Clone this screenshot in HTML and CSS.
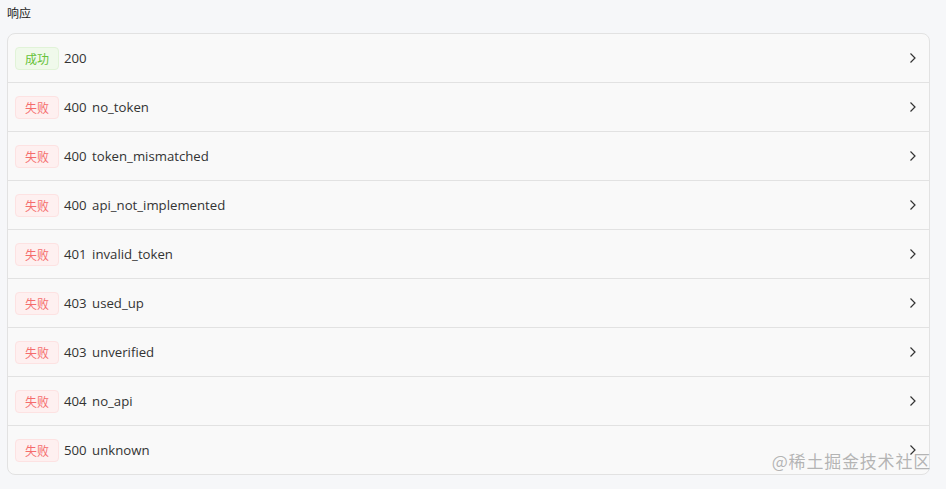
FILE: index.html
```html
<!DOCTYPE html>
<html lang="zh">
<head>
<meta charset="utf-8">
<link rel="stylesheet" href="styles.css">
</head>
<body>
<div class="page">
  <div class="title">响应</div>
  <div class="card">
    <div class="row"><span class="tag ok">成功</span><span class="label">200</span><svg class="chev" viewBox="0 0 8 12"><path d="M1.5 1.5 L6 6 L1.5 10.5" /></svg></div>
    <div class="row"><span class="tag fail">失败</span><span class="label">400 no_token</span><svg class="chev" viewBox="0 0 8 12"><path d="M1.5 1.5 L6 6 L1.5 10.5" /></svg></div>
    <div class="row"><span class="tag fail">失败</span><span class="label">400 token_mismatched</span><svg class="chev" viewBox="0 0 8 12"><path d="M1.5 1.5 L6 6 L1.5 10.5" /></svg></div>
    <div class="row"><span class="tag fail">失败</span><span class="label">400 api_not_implemented</span><svg class="chev" viewBox="0 0 8 12"><path d="M1.5 1.5 L6 6 L1.5 10.5" /></svg></div>
    <div class="row"><span class="tag fail">失败</span><span class="label">401 invalid_token</span><svg class="chev" viewBox="0 0 8 12"><path d="M1.5 1.5 L6 6 L1.5 10.5" /></svg></div>
    <div class="row"><span class="tag fail">失败</span><span class="label">403 used_up</span><svg class="chev" viewBox="0 0 8 12"><path d="M1.5 1.5 L6 6 L1.5 10.5" /></svg></div>
    <div class="row"><span class="tag fail">失败</span><span class="label">403 unverified</span><svg class="chev" viewBox="0 0 8 12"><path d="M1.5 1.5 L6 6 L1.5 10.5" /></svg></div>
    <div class="row"><span class="tag fail">失败</span><span class="label">404 no_api</span><svg class="chev" viewBox="0 0 8 12"><path d="M1.5 1.5 L6 6 L1.5 10.5" /></svg></div>
    <div class="row"><span class="tag fail">失败</span><span class="label">500 unknown</span><svg class="chev" viewBox="0 0 8 12"><path d="M1.5 1.5 L6 6 L1.5 10.5" /></svg></div>
  </div>
  <div class="watermark">@稀土掘金技术社区</div>
</div>
</body>
</html>
```
FILE: styles.css
```css
html, body {
  margin: 0;
  padding: 0;
  background: #f6f7f9;
}
body {
  font-family: "Open Sans", "Noto Sans CJK SC", sans-serif;
  color: #333;
}
.page {
  position: relative;
  padding: 4px 16px 0 7px;
  height: 485px;
}
.title {
  font-size: 12px;
  line-height: 17px;
  height: 29px;
  font-family: "Noto Sans CJK SC", sans-serif;
  color: #1a1a1a;
}
.card {
  background: #f9f9f9;
  border: 1px solid #e2e2e2;
  border-radius: 8px;
  display: flex;
  flex-direction: column;
}
.row {
  height: 48px;
  display: flex;
  align-items: center;
  padding: 0 12px 0 7px;
  border-bottom: 1px solid #e2e2e2;
}
.row:last-child {
  border-bottom: none;
}
.tag {
  box-sizing: border-box;
  height: 23px;
  padding: 0 9px;
  display: inline-flex;
  align-items: center;
  font-size: 12px;
  font-family: "Noto Sans CJK SC", sans-serif;
  border-radius: 4px;
  border: 1px solid;
  margin-right: 5px;
}
.tag.ok {
  background: #f0f9eb;
  border-color: #e1f3d8;
  color: #67c23a;
}
.tag.fail {
  background: #fef0f0;
  border-color: #fde2e2;
  color: #f56c6c;
}
.label {
  flex: 1;
  font-size: 13.2px;
  word-spacing: 2px;
  color: #333;
}
.chev {
  width: 8px;
  height: 12px;
  fill: none;
  stroke: #333;
  stroke-width: 1.2;
}
.watermark {
  position: absolute;
  right: 15px;
  bottom: 16px;
  font-size: 17px;
  color: rgba(150, 150, 150, 0.7);
  font-family: "Noto Sans CJK SC", sans-serif;
  letter-spacing: 0.8px;
}
```
